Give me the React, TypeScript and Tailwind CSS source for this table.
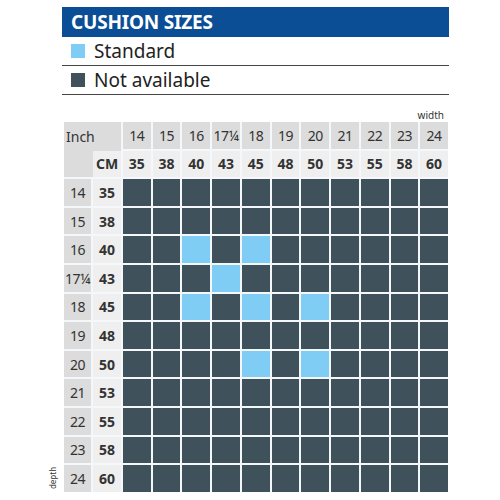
import React from 'react';

const inches = ['14', '15', '16', '17¼', '18', '19', '20', '21', '22', '23', '24'];
const cms = ['35', '38', '40', '43', '45', '48', '50', '53', '55', '58', '60'];

// [depth row, width col] pairs that come as standard
const standard = new Set(['2-2', '2-4', '3-3', '4-2', '4-4', '4-6', '6-4', '6-6']);

export default function App() {
  return (
    <div
      className="w-[500px] h-[500px] bg-white text-[#333]"
      style={{ fontFamily: '"Noto Sans", "Open Sans", sans-serif' }}
    >
      <div className="ml-[62px] w-[387px] pt-[7px]">
        <div className="h-[30px] bg-[#0b4e95] pl-[9px] flex items-center text-white font-bold text-[19px] leading-none tracking-[-0.2px]">
          CUSHION SIZES
        </div>

        <div className="h-[29px] border-b border-[#444] flex items-center">
          <span className="ml-[9px] w-[14px] h-[14px] bg-[#7fcdf5]" />
          <span className="ml-[9px] text-[19px] leading-none text-[#222]">Standard</span>
        </div>
        <div className="h-[29px] border-b border-[#444] flex items-center">
          <span className="ml-[9px] w-[14px] h-[14px] bg-[#3f525c]" />
          <span className="ml-[9px] text-[19px] leading-none text-[#222]">Not available</span>
        </div>

        <div className="h-[27px] w-[386px] flex items-end justify-end pr-[4px] pb-[2px] text-[10px] leading-none">
          width
        </div>

        <div className="relative ml-[2px] w-[384px]">
          <span className="absolute -left-[22px] bottom-[10px] -rotate-90 origin-center text-[8px] leading-none">
            depth
          </span>
          <div className="grid grid-cols-[27px_28px_repeat(11,minmax(0,1fr))] auto-rows-[26.6px] gap-[2px] bg-[#f4f8fa]">
            <div className="col-span-2 row-span-2 bg-[#dcdcdc] flex flex-col">
              <div className="flex-1 flex items-center pl-[2px] text-[14px]">Inch</div>
              <div className="h-[26.6px] flex justify-end">
                <div className="w-[28px] bg-[#efefef] flex items-center justify-center font-bold text-[14px]">
                  CM
                </div>
              </div>
            </div>
            {inches.map((n) => (
              <div key={'i' + n} className="bg-[#dcdcdc] flex items-center justify-center text-[14px] tracking-[-0.5px]">
                {n}
              </div>
            ))}
            {cms.map((n) => (
              <div key={'c' + n} className="bg-[#efefef] flex items-center justify-center font-bold text-[14px]">
                {n}
              </div>
            ))}
            {inches.map((n, r) => (
              <React.Fragment key={'r' + n}>
                <div className="bg-[#dcdcdc] flex items-center justify-center text-[14px] tracking-[-0.5px]">{n}</div>
                <div className="bg-[#efefef] flex items-center justify-center font-bold text-[14px]">{cms[r]}</div>
                {inches.map((_, c) => (
                  <div
                    key={c}
                    className={standard.has(r + '-' + c) ? 'bg-[#7fcdf5]' : 'bg-[#3f525c]'}
                  />
                ))}
              </React.Fragment>
            ))}
          </div>
        </div>
      </div>
    </div>
  );
}
